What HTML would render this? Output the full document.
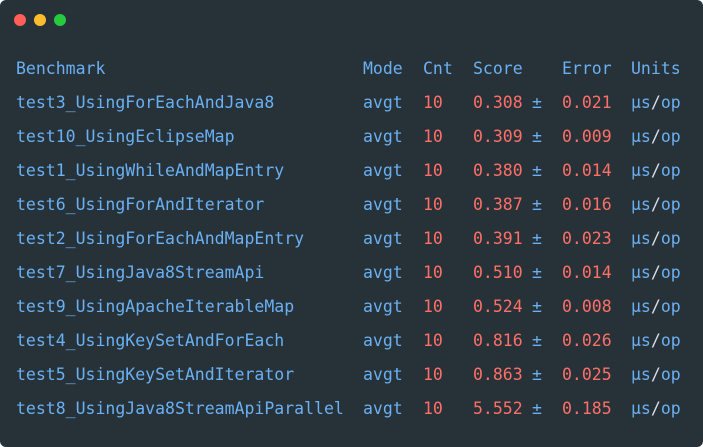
<!DOCTYPE html>
<html><head><style>
html,body{margin:0;padding:0;background:#fff;}
.w{position:relative;width:703px;height:447px;background:#263238;border-radius:6px;overflow:hidden;font-family:"DejaVu Sans Mono","Liberation Mono",monospace;font-size:16.5px;}
.d{position:absolute;top:14px;width:12px;height:12px;border-radius:50%;}
.r{position:absolute;left:0;height:20px;line-height:20px;white-space:pre;}
.r span{position:absolute;top:0;}
.b{color:#6ab0f3;}.o{color:#ff6e67;}.g{color:#d8dee9;}
</style></head><body><div class="w">
<div class="d" style="left:14px;background:#ff5f56"></div>
<div class="d" style="left:34px;background:#ffbd2e"></div>
<div class="d" style="left:54px;background:#27c93f"></div>
<div class="r" style="top:59px"><span class="b" style="left:16px">Benchmark</span><span class="b" style="left:363px">Mode</span><span class="b" style="left:423px">Cnt</span><span class="b" style="left:473px">Score</span><span class="b" style="left:562px">Error</span><span class="b" style="left:631px">Units</span></div>
<div class="r" style="top:93px"><span class="b" style="left:16px">test3_UsingForEachAndJava8</span><span class="b" style="left:363px">avgt</span><span class="o" style="left:423px">10</span><span class="o" style="left:473px">0.308</span><span class="b" style="left:532px">±</span><span class="o" style="left:562px">0.021</span><span style="left:631px"><span class="b" style="position:static">µs</span><span class="g" style="position:static">/</span><span class="b" style="position:static">op</span></span></div>
<div class="r" style="top:127px"><span class="b" style="left:16px">test10_UsingEclipseMap</span><span class="b" style="left:363px">avgt</span><span class="o" style="left:423px">10</span><span class="o" style="left:473px">0.309</span><span class="b" style="left:532px">±</span><span class="o" style="left:562px">0.009</span><span style="left:631px"><span class="b" style="position:static">µs</span><span class="g" style="position:static">/</span><span class="b" style="position:static">op</span></span></div>
<div class="r" style="top:161px"><span class="b" style="left:16px">test1_UsingWhileAndMapEntry</span><span class="b" style="left:363px">avgt</span><span class="o" style="left:423px">10</span><span class="o" style="left:473px">0.380</span><span class="b" style="left:532px">±</span><span class="o" style="left:562px">0.014</span><span style="left:631px"><span class="b" style="position:static">µs</span><span class="g" style="position:static">/</span><span class="b" style="position:static">op</span></span></div>
<div class="r" style="top:195px"><span class="b" style="left:16px">test6_UsingForAndIterator</span><span class="b" style="left:363px">avgt</span><span class="o" style="left:423px">10</span><span class="o" style="left:473px">0.387</span><span class="b" style="left:532px">±</span><span class="o" style="left:562px">0.016</span><span style="left:631px"><span class="b" style="position:static">µs</span><span class="g" style="position:static">/</span><span class="b" style="position:static">op</span></span></div>
<div class="r" style="top:229px"><span class="b" style="left:16px">test2_UsingForEachAndMapEntry</span><span class="b" style="left:363px">avgt</span><span class="o" style="left:423px">10</span><span class="o" style="left:473px">0.391</span><span class="b" style="left:532px">±</span><span class="o" style="left:562px">0.023</span><span style="left:631px"><span class="b" style="position:static">µs</span><span class="g" style="position:static">/</span><span class="b" style="position:static">op</span></span></div>
<div class="r" style="top:263px"><span class="b" style="left:16px">test7_UsingJava8StreamApi</span><span class="b" style="left:363px">avgt</span><span class="o" style="left:423px">10</span><span class="o" style="left:473px">0.510</span><span class="b" style="left:532px">±</span><span class="o" style="left:562px">0.014</span><span style="left:631px"><span class="b" style="position:static">µs</span><span class="g" style="position:static">/</span><span class="b" style="position:static">op</span></span></div>
<div class="r" style="top:297px"><span class="b" style="left:16px">test9_UsingApacheIterableMap</span><span class="b" style="left:363px">avgt</span><span class="o" style="left:423px">10</span><span class="o" style="left:473px">0.524</span><span class="b" style="left:532px">±</span><span class="o" style="left:562px">0.008</span><span style="left:631px"><span class="b" style="position:static">µs</span><span class="g" style="position:static">/</span><span class="b" style="position:static">op</span></span></div>
<div class="r" style="top:331px"><span class="b" style="left:16px">test4_UsingKeySetAndForEach</span><span class="b" style="left:363px">avgt</span><span class="o" style="left:423px">10</span><span class="o" style="left:473px">0.816</span><span class="b" style="left:532px">±</span><span class="o" style="left:562px">0.026</span><span style="left:631px"><span class="b" style="position:static">µs</span><span class="g" style="position:static">/</span><span class="b" style="position:static">op</span></span></div>
<div class="r" style="top:365px"><span class="b" style="left:16px">test5_UsingKeySetAndIterator</span><span class="b" style="left:363px">avgt</span><span class="o" style="left:423px">10</span><span class="o" style="left:473px">0.863</span><span class="b" style="left:532px">±</span><span class="o" style="left:562px">0.025</span><span style="left:631px"><span class="b" style="position:static">µs</span><span class="g" style="position:static">/</span><span class="b" style="position:static">op</span></span></div>
<div class="r" style="top:399px"><span class="b" style="left:16px">test8_UsingJava8StreamApiParallel</span><span class="b" style="left:363px">avgt</span><span class="o" style="left:423px">10</span><span class="o" style="left:473px">5.552</span><span class="b" style="left:532px">±</span><span class="o" style="left:562px">0.185</span><span style="left:631px"><span class="b" style="position:static">µs</span><span class="g" style="position:static">/</span><span class="b" style="position:static">op</span></span></div>
</div></body></html>
